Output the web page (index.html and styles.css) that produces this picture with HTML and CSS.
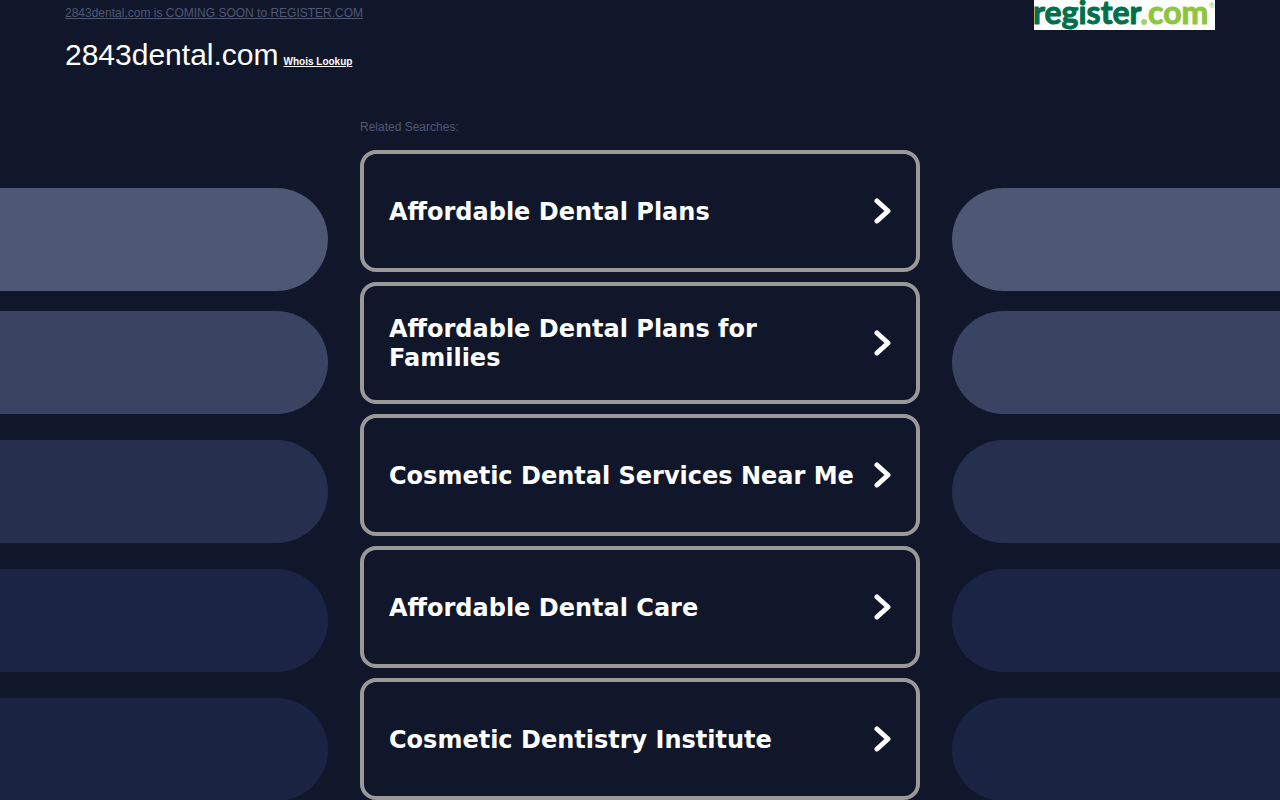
FILE: index.html
```html
<!DOCTYPE html>
<html lang="en">
<head>
<meta charset="utf-8">
<meta name="viewport" content="width=device-width, initial-scale=1">
<title>2843dental.com</title>
<link rel="stylesheet" href="styles.css">
</head>
<body>
<header class="header">
  <div class="intro">
    <a class="notice" href="#">2843dental.com is COMING SOON to REGISTER.COM</a>
    <div class="title-row">
      <h1 class="domain">2843dental.com</h1>
      <a class="whois" href="#">Whois Lookup</a>
    </div>
  </div>
  <a class="logo" href="#" aria-label="register.com">
    <svg class="logo-art" width="181" height="30" viewBox="0 0 181 30">
      <text class="logo-text logo-dark" x="-1" y="24">register</text>
      <circle cx="110" cy="22" r="3" fill="#a5d06f"/>
      <text class="logo-text logo-light" x="114" y="24">com</text>
      <text class="logo-mark" x="175" y="8">®</text>
    </svg>
  </a>
</header>
<div class="page">
  <div class="bars bars-left" aria-hidden="true">
    <div class="bar tone-1"></div>
    <div class="bar tone-2"></div>
    <div class="bar tone-3"></div>
    <div class="bar tone-4"></div>
    <div class="bar tone-5"></div>
  </div>
  <main class="searches">
    <h2 class="label">Related Searches:</h2>
    <nav class="list">
      <a class="item" href="#"><span class="item-text">Affordable Dental Plans</span><svg class="chevron" viewBox="0 0 18 28"><path d="M3 4L14 14L3 24"/></svg></a>
      <a class="item" href="#"><span class="item-text">Affordable Dental Plans for Families</span><svg class="chevron" viewBox="0 0 18 28"><path d="M3 4L14 14L3 24"/></svg></a>
      <a class="item" href="#"><span class="item-text">Cosmetic Dental Services Near Me</span><svg class="chevron" viewBox="0 0 18 28"><path d="M3 4L14 14L3 24"/></svg></a>
      <a class="item" href="#"><span class="item-text">Affordable Dental Care</span><svg class="chevron" viewBox="0 0 18 28"><path d="M3 4L14 14L3 24"/></svg></a>
      <a class="item" href="#"><span class="item-text">Cosmetic Dentistry Institute</span><svg class="chevron" viewBox="0 0 18 28"><path d="M3 4L14 14L3 24"/></svg></a>
    </nav>
  </main>
  <div class="bars bars-right" aria-hidden="true">
    <div class="bar tone-1"></div>
    <div class="bar tone-2"></div>
    <div class="bar tone-3"></div>
    <div class="bar tone-4"></div>
    <div class="bar tone-5"></div>
  </div>
</div>
</body>
</html>
```

FILE: styles.css
```css
* { box-sizing: border-box; }

body {
  margin: 0;
  background: #11172b;
  color: #fff;
  font-family: "Liberation Sans", Arial, sans-serif;
}

.header {
  display: flex;
  justify-content: space-between;
  align-items: flex-start;
  max-width: 1150px;
  margin: 0 auto;
}

.intro { padding-top: 6px; }

.notice {
  display: block;
  font-size: 12px;
  line-height: 14px;
  color: #4e5773;
}

.title-row {
  display: flex;
  align-items: baseline;
  gap: 5px;
  padding-top: 17px;
}

.domain {
  margin: 0;
  font-size: 30px;
  font-weight: 400;
  line-height: 36px;
}

.whois {
  font-size: 10px;
  font-weight: 700;
  color: #fff;
}

.logo {
  display: block;
  background: #fff;
}

.logo-art {
  display: block;
  overflow: visible;
}

.logo-text {
  font-family: Lato, sans-serif;
  font-size: 32px;
  font-weight: 700;
  stroke-width: 1;
  stroke-linejoin: round;
}

.logo-dark { fill: #00704a; stroke: #00704a; }
.logo-light { fill: #8cc63f; stroke: #8cc63f; }

.logo-mark {
  font-family: Lato, sans-serif;
  font-size: 7px;
  fill: #8cc63f;
}

.page {
  display: grid;
  grid-template-columns: 1fr minmax(0, 560px) 1fr;
  column-gap: 32px;
  padding-top: 47px;
}

.searches { min-width: 0; }

.label {
  margin: 0 0 16px;
  font-size: 12px;
  font-weight: 400;
  line-height: 14px;
  color: #4e5773;
}

.list {
  display: flex;
  flex-direction: column;
  gap: 10px;
}

.item {
  display: flex;
  justify-content: space-between;
  align-items: center;
  gap: 16px;
  min-height: 122px;
  padding: 0 24px 0 25px;
  border: 4px solid #999;
  border-radius: 16px;
  color: #fff;
  font-family: "DejaVu Sans", Verdana, sans-serif;
  font-size: 24px;
  font-weight: 700;
  line-height: 29px;
  text-decoration: none;
}

.item-text { padding-top: 2px; }

.chevron {
  flex: none;
  width: 18px;
  height: 28px;
  fill: none;
  stroke: #fff;
  stroke-width: 5;
  stroke-linecap: round;
  stroke-linejoin: round;
}

.bars {
  display: flex;
  flex-direction: column;
  gap: 26px;
  padding-top: 68px;
}

.bar { height: 103px; }
.bars-left .bar { border-radius: 0 52px 52px 0; }
.bars-right .bar { border-radius: 52px 0 0 52px; }

.tone-1 { background: #4e5773; margin-bottom: -6px; }
.tone-2 { background: #3b4363; }
.tone-3 { background: #262f4e; }
.tone-4 { background: #1b2444; }
.tone-5 { background: #1a2342; }
```
